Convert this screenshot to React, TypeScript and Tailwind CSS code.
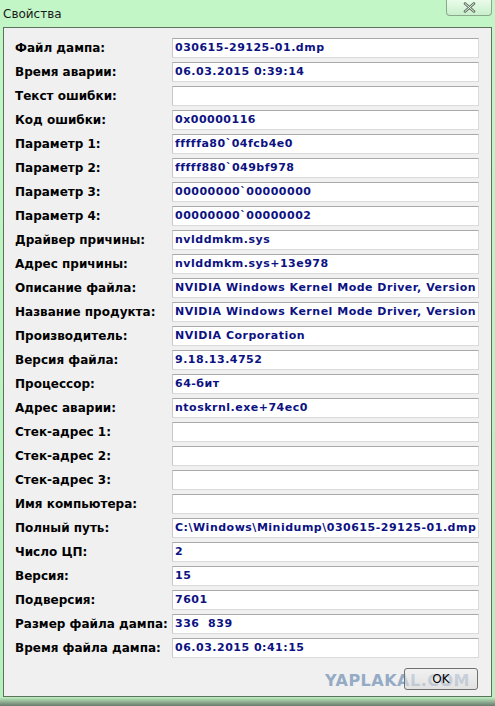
import React from 'react';

const rows: [string, string][] = [
  ['Файл дампа:', '030615-29125-01.dmp'],
  ['Время аварии:', '06.03.2015 0:39:14'],
  ['Текст ошибки:', ''],
  ['Код ошибки:', '0x00000116'],
  ['Параметр 1:', 'fffffa80`04fcb4e0'],
  ['Параметр 2:', 'fffff880`049bf978'],
  ['Параметр 3:', '00000000`00000000'],
  ['Параметр 4:', '00000000`00000002'],
  ['Драйвер причины:', 'nvlddmkm.sys'],
  ['Адрес причины:', 'nvlddmkm.sys+13e978'],
  ['Описание файла:', 'NVIDIA Windows Kernel Mode Driver, Version 347.52'],
  ['Название продукта:', 'NVIDIA Windows Kernel Mode Driver, Version 347.52'],
  ['Производитель:', 'NVIDIA Corporation'],
  ['Версия файла:', '9.18.13.4752'],
  ['Процессор:', '64-бит'],
  ['Адрес аварии:', 'ntoskrnl.exe+74ec0'],
  ['Стек-адрес 1:', ''],
  ['Стек-адрес 2:', ''],
  ['Стек-адрес 3:', ''],
  ['Имя компьютера:', ''],
  ['Полный путь:', 'C:\\Windows\\Minidump\\030615-29125-01.dmp'],
  ['Число ЦП:', '2'],
  ['Версия:', '15'],
  ['Подверсия:', '7601'],
  ['Размер файла дампа:', '336  839'],
  ['Время файла дампа:', '06.03.2015 0:41:15'],
];

export default function App() {
  return (
    <div className="w-[495px] h-[706px] overflow-hidden bg-gradient-to-b from-[#c2f6c6] to-[#b6f0bc] flex flex-col" style={{ fontFamily: 'Tahoma, "DejaVu Sans", sans-serif' }}>
      {/* Title bar */}
      <div className="h-[27px] flex items-start justify-between pl-[3px] pr-[3px]">
        <span className="mt-[5px] text-[12px] text-[#1a1a1a] font-normal">Свойства</span>
        <div className="w-[46px] h-[16px] border border-t-0 border-[#8aa88c] rounded-b-[4px] bg-gradient-to-b from-[#eafbea] to-[#c8f0cb] flex items-center justify-center">
          <svg width="13" height="11" viewBox="0 0 13 11">
            <path d="M2 1.5 L11 9.5 M11 1.5 L2 9.5" stroke="#5a6a5c" strokeWidth="2.6" fill="none" strokeLinecap="round" />
            <path d="M2 1.5 L11 9.5 M11 1.5 L2 9.5" stroke="#f4fff4" strokeWidth="1" fill="none" strokeLinecap="round" />
          </svg>
        </div>
      </div>
      {/* Panel */}
      <div className="mx-[3px] h-[670px] border border-[#5b735c] bg-[#f0f0f0] pt-[10px] pl-[11px] flex flex-col">
        <div className="flex flex-col gap-[4px]">
          {rows.map(([label, value], i) => (
            <div key={i} className="flex items-center h-[20px]">
              <div className="w-[157px] text-[12px] font-bold text-black whitespace-nowrap">{label}</div>
              <div className="w-[307px] h-[20px] bg-white border border-[#dadada] border-t-[#a9a9a9] border-l-[#c9c9c9] pl-[2px] overflow-hidden whitespace-pre text-[11px] tracking-[0.5px] font-bold text-[#0c1282] leading-[18px]">
                {value}
              </div>
            </div>
          ))}
        </div>
        <div className="flex justify-end pr-[13px] mt-[10px]">
          <div className="relative w-[74px] h-[22px]">
            <span className="absolute right-[8px] top-[1px] text-[16px] font-black tracking-[0.5px] text-[#7f9bbb] opacity-80 whitespace-nowrap" style={{ fontFamily: '"DejaVu Sans", sans-serif' }}>YAPLAKAL.COM</span>
            <div className="absolute inset-0 border border-[#707070] rounded-[3px] bg-gradient-to-b from-[#f2f2f2]/60 to-[#d8d8d8]/60 flex items-center justify-center text-[12px] text-black">
              OK
            </div>
          </div>
        </div>
      </div>
      <div className="h-[9px] bg-gradient-to-b from-[#bff2c2] to-[#6a7a6c]" />
    </div>
  );
}
